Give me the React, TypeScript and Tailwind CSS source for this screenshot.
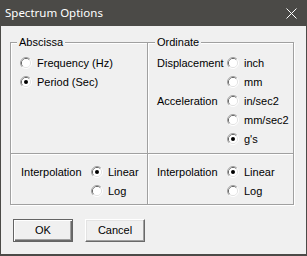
import React from 'react';

function Radio({ checked }: { checked?: boolean }) {
  return (
    <svg width="12" height="12" viewBox="0 0 12 12" className="mt-[3px] shrink-0">
      <path d="M2.11 9.89 A5.5 5.5 0 0 1 9.89 2.11" fill="none" stroke="#a0a0a0" strokeWidth="1" />
      <path d="M9.89 2.11 A5.5 5.5 0 0 1 2.11 9.89" fill="none" stroke="#ffffff" strokeWidth="1" />
      <path d="M2.82 9.18 A4.5 4.5 0 0 1 9.18 2.82" fill="none" stroke="#696969" strokeWidth="1" />
      <path d="M9.18 2.82 A4.5 4.5 0 0 1 2.82 9.18" fill="none" stroke="#e3e3e3" strokeWidth="1" />
      <circle cx="6" cy="6" r="4" fill="#ffffff" />
      {checked && <circle cx="6" cy="6" r="2" fill="#000000" />}
    </svg>
  );
}

function Option({ label, checked }: { label: string; checked?: boolean }) {
  return (
    <div className="flex h-[19px] leading-[19px]">
      <Radio checked={checked} />
      <span className="ml-[5px] whitespace-nowrap">{label}</span>
    </div>
  );
}

function Row({ label, option, checked }: { label?: string; option: string; checked?: boolean }) {
  return (
    <div className="flex h-[19px] leading-[19px]">
      <div className="w-[70px] shrink-0 whitespace-nowrap">{label}</div>
      <Radio checked={checked} />
      <span className="ml-[5px] whitespace-nowrap">{option}</span>
    </div>
  );
}

export default function App() {
  return (
    <div className="w-[307px] h-[256px] bg-[#4b4a47] flex flex-col px-px pb-[2px] font-['Liberation_Sans',Arial,sans-serif] text-[11px] text-black">
      {/* Title bar */}
      <div className="h-[26px] shrink-0 flex items-center justify-between pl-[4px] pr-[9px] text-white">
        <span className="font-['Noto_Sans',sans-serif] text-[11.5px]">Spectrum Options</span>
        <svg width="11" height="11" viewBox="0 0 11 11">
          <path d="M0.5 0.5 L10.5 10.5 M10.5 0.5 L0.5 10.5" stroke="#ffffff" strokeWidth="1" />
        </svg>
      </div>

      {/* Body */}
      <div className="flex-1 bg-[#f0f0f0] pl-[9px] pt-[16px]">
        <div className="relative w-[284px] h-[163px] border border-[#a0a0a0] shadow-[1px_1px_0_#ffffff,inset_1px_1px_0_#ffffff] grid grid-cols-[137px_145px] grid-rows-[111px_50px]">
          {/* Abscissa */}
          <div className="relative border-r border-b border-[#a0a0a0] pt-[11px] pl-[9px]">
            <span className="absolute left-[6px] top-[-7px] px-[2px] bg-[#f0f0f0] leading-[13px]">Abscissa</span>
            <Option label="Frequency (Hz)" />
            <Option label="Period (Sec)" checked />
          </div>

          {/* Ordinate */}
          <div className="relative border-b border-[#a0a0a0] shadow-[inset_1px_0_0_#ffffff] pt-[11px] pl-[9px]">
            <span className="absolute left-[7px] top-[-7px] px-[2px] bg-[#f0f0f0] leading-[13px]">Ordinate</span>
            <Row label="Displacement" option="inch" />
            <Row option="mm" />
            <Row label="Acceleration" option="in/sec2" />
            <Row option="mm/sec2" />
            <Row option="g's" checked />
          </div>

          {/* Interpolation left */}
          <div className="border-r border-[#a0a0a0] shadow-[inset_0_1px_0_#ffffff] pt-[9px] pl-[10px]">
            <Row label="Interpolation" option="Linear" checked />
            <Row option="Log" />
          </div>

          {/* Interpolation right */}
          <div className="shadow-[inset_1px_1px_0_#ffffff] pt-[9px] pl-[9px]">
            <Row label="Interpolation" option="Linear" checked />
            <Row option="Log" />
          </div>
        </div>

        {/* Buttons */}
        <div className="flex gap-[12px] mt-[14px] ml-[3px]">
          <button className="w-[60px] h-[23px] border border-[#646464] bg-[#f0f0f0] shadow-[inset_1px_1px_0_#ffffff,inset_-1px_-1px_0_#696969,inset_-2px_-2px_0_#a0a0a0] flex items-center justify-center">
            OK
          </button>
          <button className="w-[60px] h-[23px] border border-t-white border-l-white border-b-[#696969] border-r-[#696969] bg-[#f0f0f0] shadow-[inset_-1px_-1px_0_#a0a0a0,inset_1px_1px_0_#e3e3e3] flex items-center justify-center">
            Cancel
          </button>
        </div>
      </div>
    </div>
  );
}
